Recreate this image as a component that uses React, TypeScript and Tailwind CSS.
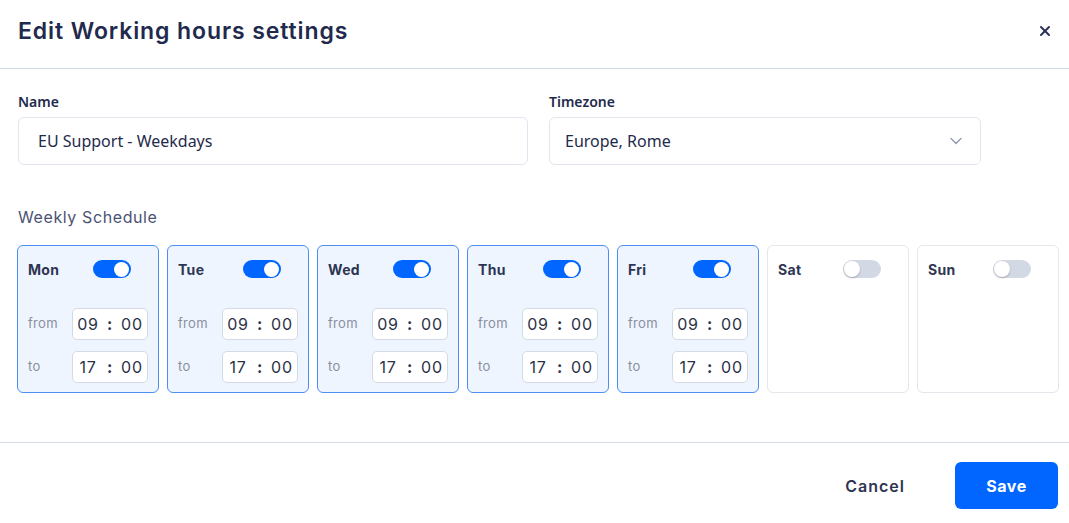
import { X, ChevronDown } from "lucide-react";

const heading = "font-['Inter','Liberation_Sans',sans-serif]";
const body = "font-['Noto_Sans','Liberation_Sans',sans-serif]";

type Day = { label: string; on: boolean; from: [string, string]; to: [string, string] };

const days: Day[] = [
    { label: "Mon", on: true, from: ["09", "00"], to: ["17", "00"] },
    { label: "Tue", on: true, from: ["09", "00"], to: ["17", "00"] },
    { label: "Wed", on: true, from: ["09", "00"], to: ["17", "00"] },
    { label: "Thu", on: true, from: ["09", "00"], to: ["17", "00"] },
    { label: "Fri", on: true, from: ["09", "00"], to: ["17", "00"] },
    { label: "Sat", on: false, from: ["09", "00"], to: ["17", "00"] },
    { label: "Sun", on: false, from: ["09", "00"], to: ["17", "00"] },
];

function Toggle({ on }: { on: boolean }) {
    return (
        <div
            className={
                on
                    ? "w-[38px] h-[18px] rounded-full bg-[#0066ff] flex items-center justify-end px-[2px]"
                    : "w-[38px] h-[18px] rounded-full bg-[#d3d8e5] flex items-center justify-start px-[1px]"
            }
        >
            <div
                className={
                    on
                        ? "w-[15px] h-[15px] rounded-full bg-white"
                        : "w-[16px] h-[16px] rounded-full bg-white shadow-[0_1px_2px_rgba(0,0,0,0.25)]"
                }
            />
        </div>
    );
}

function TimeBox({ value }: { value: [string, string] }) {
    return (
        <div className="w-[76px] h-[32px] bg-white border border-[#d4dae4] rounded-[5px] flex items-center justify-center text-[16px] tracking-[0.8px] text-[#2b3247]">
            <span className="w-[24px] text-center">{value[0]}</span>
            <span className="w-[20px] text-center font-bold">:</span>
            <span className="w-[24px] text-center">{value[1]}</span>
        </div>
    );
}

function DayCard({ day }: { day: Day }) {
    return (
        <div
            className={
                day.on
                    ? "h-[148px] rounded-[6px] border border-[#4d8ef5] bg-[#eef5ff] px-[10px] pt-[13px]"
                    : "h-[148px] rounded-[6px] border border-[#e4e7ec] bg-white px-[10px] pt-[13px]"
            }
        >
            <div className="flex items-center h-[20px]">
                <span className="w-[65px] text-[14px] font-bold tracking-[0.3px] text-[#2e3552]">{day.label}</span>
                <Toggle on={day.on} />
            </div>
            {day.on && (
                <div className="mt-[29px] flex flex-col gap-[11px]">
                    <div className="flex items-center">
                        <span className="w-[44px] text-[13px] tracking-[0.3px] text-[#8a8f9e]">from</span>
                        <TimeBox value={day.from} />
                    </div>
                    <div className="flex items-center">
                        <span className="w-[44px] text-[13px] tracking-[0.3px] text-[#8a8f9e]">to</span>
                        <TimeBox value={day.to} />
                    </div>
                </div>
            )}
        </div>
    );
}

export default function App() {
    return (
        <div className={`w-[1069px] h-[523px] bg-white text-[#1f2a4d] ${heading}`}>
            {/* Header */}
            <div className="h-[69px] border-b border-[#d3dce7] flex items-center justify-between pl-[18px] pr-[16px] pb-[6px]">
                <h1 className="text-[23px] font-semibold tracking-[0.9px] text-[#1f2a4d]">Edit Working hours settings</h1>
                <X className="w-[16px] h-[16px] text-[#2a3157]" strokeWidth={3} />
            </div>

            {/* Body */}
            <div className="pl-[18px] pt-[23px]">
                <div className={`flex gap-[21px] ${body}`}>
                    <div className="w-[510px]">
                        <div className="text-[14px] font-semibold leading-5 mb-[5px] text-[#1f2a4d]">Name</div>
                        <div className="h-[48px] rounded-[6px] border border-[#e1e6ee] flex items-center pl-[19px] text-[16px] text-[#1f2a4d]">
                            EU Support - Weekdays
                        </div>
                    </div>
                    <div className="w-[432px]">
                        <div className="text-[14px] font-semibold leading-5 mb-[5px] text-[#1f2a4d]">Timezone</div>
                        <div className="h-[48px] rounded-[6px] border border-[#e1e6ee] flex items-center justify-between pl-[15px] pr-[14px] text-[16px] text-[#1f2a4d]">
                            <span>Europe, Rome</span>
                            <ChevronDown className="w-[20px] h-[20px] text-[#8e97ae]" strokeWidth={1.5} />
                        </div>
                    </div>
                </div>

                <div className="mt-[40px] mb-[16px] text-[16px] leading-6 tracking-[0.6px] text-[#4a5273]">Weekly Schedule</div>

                <div className="grid grid-cols-7 gap-[8px] w-[1042px] -ml-px">
                    {days.map((d) => (
                        <DayCard key={d.label} day={d} />
                    ))}
                </div>
            </div>

            {/* Footer */}
            <div className="mt-[49px] border-t border-[#d3dce7] pt-[19px] pr-[11px] flex justify-end items-center gap-[50px]">
                <button className="text-[16px] font-semibold tracking-[1px] text-[#2e3552]">Cancel</button>
                <button className="w-[103px] h-[47px] rounded-[6px] bg-[#0066ff] text-white text-[16px] font-bold tracking-[0.6px]">Save</button>
            </div>
        </div>
    );
}
